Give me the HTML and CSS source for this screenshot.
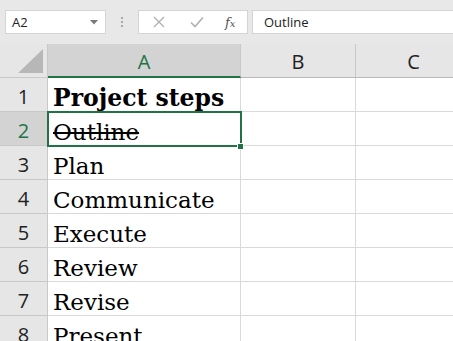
FILE: index.html
```html
<!DOCTYPE html>
<html>
<head>
<meta charset="utf-8">
<link rel="stylesheet" href="styles.css">
</head>
<body>
<div class="toolbar">
  <div class="namebox">
    <span class="nb-text">A2</span>
    <svg class="nb-arrow" width="8" height="5" viewBox="0 0 8 5"><path d="M0 0 L8 0 L4 4.5 Z" fill="#7a7a7a"/></svg>
  </div>
  <div class="dots"><i></i><i></i><i></i></div>
  <div class="fbuttons">
    <svg class="ic-x" width="12" height="12" viewBox="0 0 12 12"><path d="M1 1 L11 11 M11 1 L1 11" stroke="#b0b0b0" stroke-width="1.4" fill="none"/></svg>
    <svg class="ic-ok" width="14" height="12" viewBox="0 0 14 12"><path d="M1 6.5 L5 10.5 L13 1.5" stroke="#b0b0b0" stroke-width="1.6" fill="none"/></svg>
    <span class="fx">f<span class="fx-x">x</span></span>
  </div>
  <div class="formula">Outline</div>
</div>
<div class="sheet">
  <div class="grid">
    <div class="corner"><svg width="28" height="26" viewBox="0 0 28 26"><path d="M26 0 L26 24 L1 24 Z" fill="#b7b7b7"/></svg></div>
    <div class="ch sel">A</div>
    <div class="ch">B</div>
    <div class="ch last">C</div>

    <div class="rh">1</div><div class="cell bold">Project steps</div><div class="cell"></div><div class="cell last"></div>
    <div class="rh sel">2</div><div class="cell strike">Outline</div><div class="cell"></div><div class="cell last"></div>
    <div class="rh">3</div><div class="cell">Plan</div><div class="cell"></div><div class="cell last"></div>
    <div class="rh">4</div><div class="cell">Communicate</div><div class="cell"></div><div class="cell last"></div>
    <div class="rh">5</div><div class="cell">Execute</div><div class="cell"></div><div class="cell last"></div>
    <div class="rh">6</div><div class="cell">Review</div><div class="cell"></div><div class="cell last"></div>
    <div class="rh">7</div><div class="cell">Revise</div><div class="cell"></div><div class="cell last"></div>
    <div class="rh">8</div><div class="cell">Present</div><div class="cell"></div><div class="cell last"></div>
  </div>
  <div class="selection"></div>
  <div class="handle"></div>
</div>
</body>
</html>
```

FILE: styles.css
```css
html, body {
  margin: 0;
  padding: 0;
  background: #e8e8e8;
  overflow: hidden;
  width: 453px;
  height: 341px;
  font-family: "Open Sans", "Noto Sans", sans-serif;
}

.toolbar {
  height: 44px;
  box-sizing: border-box;
  padding: 10px 0 0 5px;
  display: flex;
  align-items: flex-start;
}

.namebox {
  width: 101px;
  height: 24px;
  box-sizing: border-box;
  background: #fff;
  border: 1px solid #d4d4d4;
  display: flex;
  align-items: center;
  justify-content: space-between;
  padding: 0 7px 0 6px;
}

.nb-text {
  font-size: 13px;
  color: #222;
}

.dots {
  width: 32px;
  height: 24px;
  display: flex;
  flex-direction: column;
  align-items: center;
  justify-content: center;
  gap: 2px;
}
.dots i {
  display: block;
  width: 2px;
  height: 2px;
  background: #a8a8a8;
}

.fbuttons {
  width: 110px;
  height: 24px;
  box-sizing: border-box;
  background: #fff;
  border: 1px solid #d4d4d4;
  display: flex;
  align-items: center;
  padding-left: 14px;
}
.ic-x { margin-right: 25px; }
.ic-ok { margin-right: 21px; }

.fx {
  font-family: "DejaVu Serif", serif;
  font-style: italic;
  font-size: 13px;
  color: #555;
}
.fx-x {
  font-size: 10px;
}

.formula {
  margin-left: 4px;
  flex: 1;
  height: 24px;
  box-sizing: border-box;
  background: #fff;
  border: 1px solid #d4d4d4;
  border-right: none;
  font-size: 13px;
  color: #222;
  line-height: 22px;
  padding-left: 11px;
}

.sheet {
  position: relative;
  background: #fff;
  width: 453px;
  height: 297px;
  overflow: hidden;
}

.grid {
  display: grid;
  grid-template-columns: 48px 193px 115px 116px;
  grid-auto-rows: 34px;
}

.corner {
  background: #e6e6e6;
  border-right: 1px solid #c8c8c8;
  border-bottom: 1px solid #c8c8c8;
  display: flex;
  align-items: flex-end;
  justify-content: flex-end;
  padding: 0 2px 2px 0;
  box-sizing: border-box;
}
.corner svg { display: block; }

.ch {
  background: #e6e6e6;
  border-right: 1px solid #c8c8c8;
  border-bottom: 1px solid #b9b9b9;
  box-sizing: border-box;
  text-align: center;
  font-size: 20px;
  line-height: 36px;
  color: #222;
}
.ch.sel {
  background: #d3d3d3;
  color: #217346;
  border-bottom: 2px solid #217346;
}

.rh {
  background: #e6e6e6;
  border-right: 1px solid #c8c8c8;
  border-bottom: 1px solid #c8c8c8;
  box-sizing: border-box;
  text-align: center;
  font-size: 20px;
  line-height: 38px;
  color: #222;
  overflow: hidden;
}
.rh.sel {
  background: #d3d3d3;
  color: #217346;
}

.cell {
  border-right: 1px solid #d9d9d9;
  border-bottom: 1px solid #d9d9d9;
  box-sizing: border-box;
  font-family: "DejaVu Serif", "Liberation Serif", serif;
  font-size: 23px;
  line-height: 40px;
  padding-left: 5px;
  color: #000;
  white-space: nowrap;
  overflow: hidden;
}
.cell.bold { font-weight: bold; font-size: 23.5px; }
.cell.strike { text-decoration: line-through; text-decoration-thickness: 1.5px; }

.selection {
  position: absolute;
  left: 47px;
  top: 67px;
  width: 195px;
  height: 36px;
  box-sizing: border-box;
  border: 2px solid #217346;
  pointer-events: none;
}
.handle {
  position: absolute;
  left: 237px;
  top: 99px;
  width: 7px;
  height: 7px;
  box-sizing: border-box;
  background: #217346;
  border: 1px solid #fff;
}
```
